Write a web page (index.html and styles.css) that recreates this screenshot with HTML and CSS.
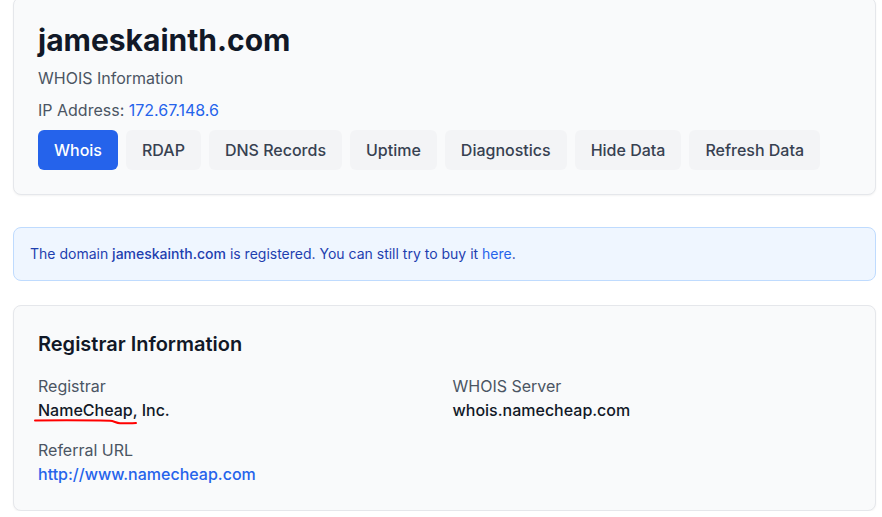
FILE: index.html
```html
<!DOCTYPE html>
<html lang="en">
<head>
<meta charset="utf-8">
<title>jameskainth.com WHOIS</title>
<link rel="stylesheet" href="styles.css">
</head>
<body>
<main class="page">
  <section class="card header-card">
    <h1 class="domain">jameskainth.com</h1>
    <p class="subtitle">WHOIS Information</p>
    <p class="ip">IP Address: <a class="link" href="#">172.67.148.6</a></p>
    <nav class="tabs">
      <button class="tab active">Whois</button>
      <button class="tab">RDAP</button>
      <button class="tab">DNS Records</button>
      <button class="tab">Uptime</button>
      <button class="tab">Diagnostics</button>
      <button class="tab">Hide Data</button>
      <button class="tab">Refresh Data</button>
    </nav>
  </section>

  <div class="alert">The domain <strong>jameskainth.com</strong> is registered. You can still try to buy it <a class="alert-link" href="#">here</a>.</div>

  <section class="card info-card">
    <h2 class="section-title">Registrar Information</h2>
    <div class="grid">
      <div class="field">
        <div class="label">Registrar</div>
        <div class="value marked">NameCheap, Inc.
          <svg class="scribble" width="110" height="10" viewBox="0 0 110 10"><path d="M1 3.5 C 30 3.2, 60 3.4, 76 3.8 C 80 4, 82 6, 86 6.2 C 95 6.4, 100 6.2, 102 6" fill="none" stroke="#ff0000" stroke-width="2" stroke-linecap="round"/></svg>
        </div>
      </div>
      <div class="field">
        <div class="label">WHOIS Server</div>
        <div class="value">whois.namecheap.com</div>
      </div>
      <div class="field">
        <div class="label">Referral URL</div>
        <a class="value link" href="#">http://www.namecheap.com</a>
      </div>
    </div>
  </section>
</main>
</body>
</html>
```

FILE: styles.css
```css
* { box-sizing: border-box; }
html, body { margin: 0; padding: 0; background: #ffffff; }
body {
  font-family: Inter, "Noto Sans", sans-serif;
  color: #111827;
  -webkit-font-smoothing: antialiased;
}
.page {
  margin: -3px 6px 0 13px;
  display: flex;
  flex-direction: column;
}
.card {
  background: #f9fafb;
  border: 1px solid #e5e7eb;
  border-radius: 8px;
  box-shadow: 0 1px 2px rgba(0,0,0,0.05);
  padding: 24px;
}
.domain {
  margin: 0;
  font-size: 30px;
  line-height: 36px;
  font-weight: 700;
  color: #111827;
}
.subtitle, .ip {
  margin: 8px 0 0;
  font-size: 16px;
  line-height: 24px;
  color: #4b5563;
}
.link { color: #2563eb; text-decoration: none; }
.tabs {
  margin-top: 8px;
  display: flex;
  gap: 8px;
  flex-wrap: wrap;
}
.tab {
  font-family: inherit;
  font-size: 16px;
  font-weight: 500;
  line-height: 24px;
  height: 40px;
  padding: 8px 16px;
  border: none;
  border-radius: 6px;
  background: #f3f4f6;
  color: #374151;
}
.tab.active { background: #2563eb; color: #ffffff; }
.alert {
  margin-top: 32px;
  background: #eff6ff;
  border: 1px solid #bfdbfe;
  border-radius: 8px;
  padding: 16px;
  font-size: 14px;
  line-height: 20px;
  color: #1e40af;
}
.alert strong { font-weight: 500; }
.alert-link { color: #2563eb; text-decoration: none; }
.info-card { margin-top: 24px; }
.section-title {
  margin: 0;
  font-size: 20px;
  line-height: 28px;
  font-weight: 600;
  color: #111827;
}
.grid {
  margin-top: 16px;
  display: grid;
  grid-template-columns: 1fr 1fr;
  column-gap: 16px;
  row-gap: 16px;
}
.label {
  font-size: 16px;
  line-height: 24px;
  color: #4b5563;
}
.value {
  display: block;
  font-size: 16px;
  line-height: 24px;
  font-weight: 500;
  color: #111827;
}
.value.link { color: #2563eb; }
.marked { position: relative; }
.scribble {
  position: absolute;
  left: -4px;
  top: 19px;
}
```
